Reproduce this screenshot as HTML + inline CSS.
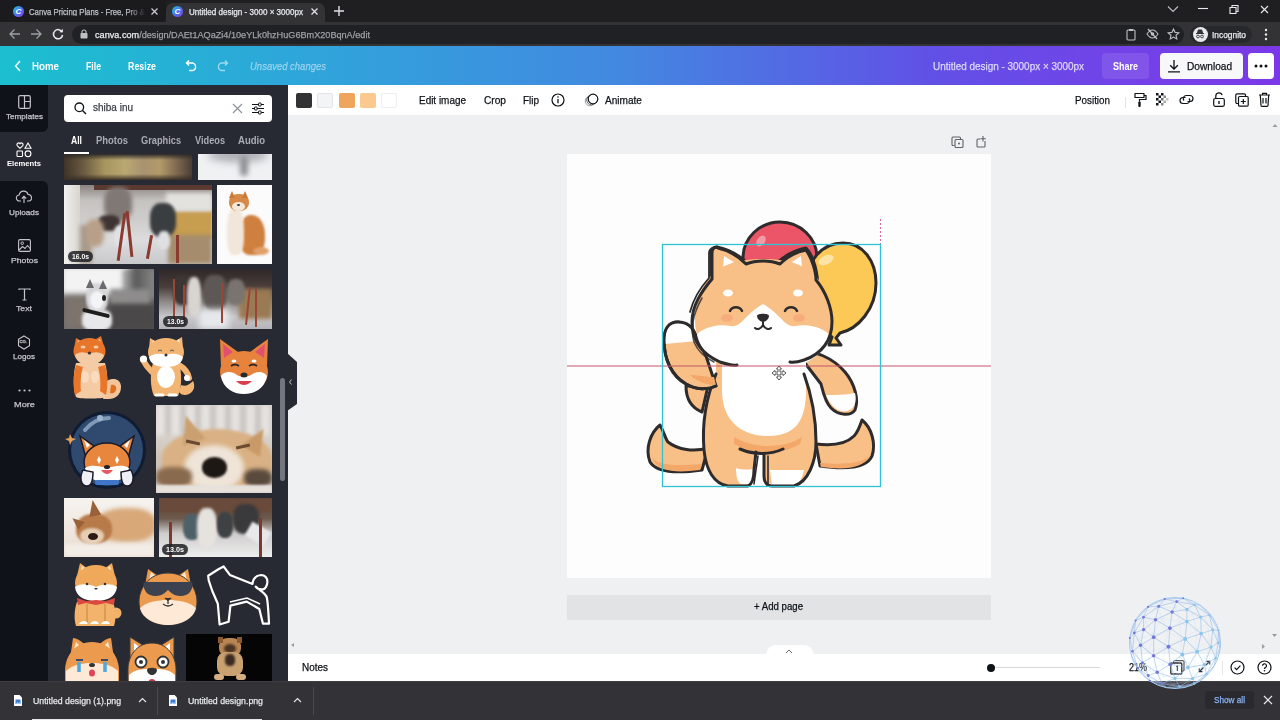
<!DOCTYPE html>
<html><head><meta charset="utf-8">
<style>
*{margin:0;padding:0;box-sizing:border-box}
html,body{width:1280px;height:720px;overflow:hidden;font-family:"Liberation Sans",sans-serif;background:#eef0f2;position:relative}
.a{position:absolute}
svg{position:absolute;overflow:visible}
.t{position:absolute;white-space:nowrap;line-height:1;transform-origin:0 50%;font-style:normal;-webkit-text-stroke:.25px currentColor}
.t.b{-webkit-text-stroke:0}
.b{font-weight:700}
#tabs{left:0;top:0;width:1280px;height:22px;background:#1f1f22}
#addr{left:0;top:22px;width:1280px;height:24px;background:#333336}
#hdr{left:0;top:46px;width:1280px;height:39px;background:linear-gradient(90deg,#1bbfcf 0%,#2ea6da 23%,#4289e0 48%,#6150e6 73%,#7342e8 88%,#7b38e8 100%)}
#nav{left:0;top:85px;width:48px;height:596px;background:#282a33}
#panel{left:48px;top:85px;width:240px;height:596px;background:#282a33;overflow:hidden}
#tool{left:288px;top:85px;width:992px;height:30px;background:#fff;box-shadow:0 1px 1px rgba(0,0,0,.06)}
#foot{left:288px;top:654px;width:992px;height:27px;background:#fff}
#dl{left:0;top:681px;width:1280px;height:39px;background:#333236;border-top:1px solid #3e3d42}
.nl{color:#c3c5ca;font-size:7.5px}
</style></head><body>
<!-- ===== browser tabs ===== -->
<div id="tabs" class="a">
  <div class="a" style="left:0;top:0;width:166px;height:22px;background:#1b1b1e;border-bottom-right-radius:6px"></div>
  <div class="a" style="left:166px;top:3px;width:159px;height:19px;background:#333336;border-radius:7px 7px 0 0"></div>
  <div class="a" style="left:13px;top:5.5px;width:11px;height:11px;border-radius:50%;background:linear-gradient(135deg,#22c6d6,#4e6ff0 55%,#8b3ce8);color:#fff;font:italic 700 8px 'Liberation Sans';text-align:center;line-height:11px">C</div>
  <i class="t" style="left: 29px; top: 7.5px; font-size: 8.5px; color: rgb(189, 193, 198); mask-image: linear-gradient(90deg, rgb(0, 0, 0) 85%, transparent); transform: scaleX(0.909);">Canva Pricing Plans - Free, Pro &amp;</i>
  <svg style="left:150px;top:7px" width="9" height="9"><path d="M1.5 1.5l6 6M7.5 1.5l-6 6" stroke="#c8cacd" stroke-width="1.3"></path></svg>
  <div class="a" style="left:172px;top:5.5px;width:11px;height:11px;border-radius:50%;background:linear-gradient(135deg,#22c6d6,#4e6ff0 55%,#8b3ce8);color:#fff;font:italic 700 8px 'Liberation Sans';text-align:center;line-height:11px">C</div>
  <i class="t" style="left: 189px; top: 7.5px; font-size: 8.5px; color: rgb(232, 234, 237); transform: scaleX(0.948);">Untitled design - 3000 × 3000px</i>
  <svg style="left:309.5px;top:7px" width="9" height="9"><path d="M1.5 1.5l6 6M7.5 1.5l-6 6" stroke="#e0e2e5" stroke-width="1.3"></path></svg>
  <svg style="left:333px;top:5px" width="12" height="12"><path d="M6 1v10M1 6h10" stroke="#e0e2e5" stroke-width="1.4"></path></svg>
  <svg style="left:1167px;top:5px" width="12" height="8"><path d="M1 1.5l5 5 5-5" stroke="#bdc1c6" stroke-width="1.1" fill="none"></path></svg>
  <svg style="left:1198px;top:7px" width="11" height="4"><path d="M0 1.5h10" stroke="#e8eaed" stroke-width="1.1"></path></svg>
  <svg style="left:1229px;top:4px" width="10" height="10"><path d="M1 3.5h6v6h-6z M3 3.5v-2h6v6h-2" stroke="#e8eaed" stroke-width="1.1" fill="none"></path></svg>
  <svg style="left:1260px;top:5px" width="9" height="9"><path d="M1 1l7 7M8 1L1 8" stroke="#e8eaed" stroke-width="1.1"></path></svg>
</div>
<!-- ===== address bar ===== -->
<div id="addr" class="a">
  <svg style="left:8px;top:6px" width="13" height="12"><path d="M12 6H2M6.5 1.5L2 6l4.5 4.5" stroke="#9aa0a6" stroke-width="1.3" fill="none"></path></svg>
  <svg style="left:30px;top:6px" width="13" height="12"><path d="M1 6h10M6.5 1.5L11 6l-4.5 4.5" stroke="#9aa0a6" stroke-width="1.3" fill="none"></path></svg>
  <svg style="left:52px;top:6px" width="12" height="12"><path d="M10.2 4.2A4.6 4.6 0 1 0 10.6 7" stroke="#e8eaed" stroke-width="1.5" fill="none"></path><path d="M7.3 4.3h3.6V0.7z" fill="#e8eaed"></path></svg>
  <div class="a" style="left:72px;top:3px;width:1112px;height:19px;border-radius:10px;background:#202124"></div>
  <svg style="left:80px;top:7px" width="8" height="10"><rect x="0.5" y="4" width="7" height="5.5" rx="0.8" fill="#bdc1c6"></rect><path d="M2 4.5V3a2 2 0 0 1 4 0v1.5" stroke="#bdc1c6" stroke-width="1.1" fill="none"></path></svg>
  <i class="t" style="left: 95px; top: 9px; font-size: 9px; color: rgb(232, 234, 237); transform: scaleX(1.014);">canva.com<span style="color:#9aa0a6">/design/DAEt1AQaZi4/10eYLk0hzHuG6BmX20BqnA/edit</span></i>
  <svg style="left:1126px;top:6px" width="10" height="13"><rect x="1" y="2" width="8" height="10" rx="1" stroke="#bdc1c6" stroke-width="1.1" fill="none"></rect><rect x="3" y="1" width="4" height="2" fill="#bdc1c6"></rect></svg>
  <svg style="left:1146px;top:6px" width="13" height="12"><path d="M1 6c2-3 4-4 5.5-4s3.5 1 5.5 4c-2 3-4 4-5.5 4S3 9 1 6z" stroke="#bdc1c6" stroke-width="1.1" fill="none"></path><circle cx="6.5" cy="6" r="1.8" fill="#bdc1c6"></circle><path d="M2 1l9 10" stroke="#bdc1c6" stroke-width="1.2"></path></svg>
  <svg style="left:1167px;top:5.5px" width="13" height="13"><path d="M6.5 1l1.6 3.4 3.7.4-2.8 2.5.8 3.7-3.3-1.9-3.3 1.9.8-3.7L1.2 4.8l3.7-.4z" stroke="#bdc1c6" stroke-width="1.1" fill="none"></path></svg>
  <div class="a" style="left:1190px;top:4px;width:62px;height:17px;border-radius:9px;background:#27282b"></div>
  <div class="a" style="left:1192.5px;top:5px;width:15px;height:15px;border-radius:50%;background:#e8eaed"></div>
  <svg style="left:1193px;top:6px" width="14" height="13"><path d="M3 5.5h8M4.5 5l1-3h3l1 3" stroke="#333" stroke-width="1.2" fill="#333"></path><circle cx="5" cy="8.5" r="1.4" stroke="#333" stroke-width="0.9" fill="none"></circle><circle cx="9" cy="8.5" r="1.4" stroke="#333" stroke-width="0.9" fill="none"></circle></svg>
  <i class="t" style="left: 1212px; top: 9px; font-size: 9px; color: rgb(232, 234, 237); transform: scaleX(0.931);">Incognito</i>
  <svg style="left:1264px;top:6px" width="4" height="13"><circle cx="2" cy="2" r="1.2" fill="#e8eaed"></circle><circle cx="2" cy="6.5" r="1.2" fill="#e8eaed"></circle><circle cx="2" cy="11" r="1.2" fill="#e8eaed"></circle></svg>
</div>
<!-- ===== canva header ===== -->
<div id="hdr" class="a">
  <svg style="left:14px;top:14px" width="8" height="12"><path d="M6 1L1.5 6 6 11" stroke="#fff" stroke-width="1.4" fill="none"></path></svg>
  <i class="t b" style="left: 32px; top: 14.5px; font-size: 10.5px; color: rgb(255, 255, 255); transform: scaleX(0.925);">Home</i>
  <i class="t b" style="left: 86px; top: 14.5px; font-size: 10.5px; color: rgb(255, 255, 255); transform: scaleX(0.829);">File</i>
  <i class="t b" style="left: 128px; top: 14.5px; font-size: 10.5px; color: rgb(255, 255, 255); transform: scaleX(0.841);">Resize</i>
  <svg style="left:185px;top:13px" width="14" height="12"><path d="M4 1.5L1.5 4 4 6.5M1.8 4H8a4 4 0 0 1 0 7.5H4" stroke="#fff" stroke-width="1.3" fill="none"></path></svg>
  <svg style="left:215px;top:12.5px" width="14" height="12"><path d="M10 1.5L12.5 4 10 6.5M12.2 4H6a4 4 0 0 0 0 7.5H10" stroke="rgba(255,255,255,.55)" stroke-width="1.3" fill="none"></path></svg>
  <i class="t" style="left: 250px; top: 14.5px; font-size: 10.5px; color: rgba(255, 255, 255, 0.42); font-style: italic; transform: scaleX(0.904);">Unsaved changes</i>
  <i class="t" style="left: 933px; top: 14.5px; font-size: 10.5px; color: rgba(255, 255, 255, 0.7); transform: scaleX(0.946);">Untitled design - 3000px × 3000px</i>
  <div class="a" style="left:1102px;top:7px;width:47px;height:26px;border-radius:4px;background:rgba(255,255,255,.1)"></div>
  <i class="t b" style="left: 1113px; top: 14.5px; font-size: 10.5px; color: rgb(255, 255, 255); transform: scaleX(0.857);">Share</i>
  <div class="a" style="left:1160px;top:7px;width:83px;height:26px;border-radius:4px;background:#f8f7fa"></div>
  <svg style="left:1167px;top:13px" width="14" height="14"><path d="M7 1v9M3.2 6.3L7 10l3.8-3.7M1 12.8h12" stroke="#0e1318" stroke-width="1.3" fill="none"></path></svg>
  <i class="t" style="left: 1187px; top: 14.5px; font-size: 10.5px; color: rgb(14, 19, 24); transform: scaleX(0.964);">Download</i>
  <div class="a" style="left:1248px;top:7px;width:26px;height:26px;border-radius:4px;background:#fff"></div>
  <svg style="left:1254px;top:18px" width="14" height="4"><circle cx="2" cy="2" r="1.5" fill="#0e1318"></circle><circle cx="7" cy="2" r="1.5" fill="#0e1318"></circle><circle cx="12" cy="2" r="1.5" fill="#0e1318"></circle></svg>
</div>
<!-- ===== left nav ===== -->
<div id="nav" class="a">
    <div class="a" style="left:0;top:0;width:48px;height:47px;background:#0f1218;border-bottom-right-radius:6px"></div>
  <div class="a" style="left:0;top:96px;width:48px;height:500px;background:#0f1218;border-top-right-radius:6px"></div>
  <svg style="left:18px;top:10px" width="13" height="14"><rect x="0.7" y="0.7" width="11.6" height="12.6" rx="1.5" stroke="#c3c5ca" stroke-width="1.2" fill="none"></rect><path d="M6.5 1v12M6.5 6.5h5.8" stroke="#c3c5ca" stroke-width="1.2"></path></svg>
  <i class="t nl" style="left: 5.5px; top: 28px; transform: scaleX(1.082);">Templates</i>
  <svg style="left:16px;top:57px" width="16" height="16"><path d="M4 6.3L1.2 3.6a1.6 1.6 0 0 1 2.8-1.8 1.6 1.6 0 0 1 2.8 1.8z" stroke="#fff" stroke-width="1.1" fill="none"></path><path d="M12 1l3 5.3H9z" stroke="#fff" stroke-width="1.1" fill="none"></path><rect x="1" y="9" width="5.5" height="5.5" rx="0.8" stroke="#fff" stroke-width="1.1" fill="none"></rect><circle cx="12" cy="11.8" r="2.9" stroke="#fff" stroke-width="1.1" fill="none"></circle></svg>
  <i class="t nl b" style="left: 7px; top: 75px; color: rgb(255, 255, 255); transform: scaleX(1.019);">Elements</i>
  <svg style="left:16px;top:105px" width="16" height="14"><path d="M5 11H3.5a3 3 0 0 1-.3-6A4.5 4.5 0 0 1 12 4.5a3 3 0 0 1 .5 6.5H11" stroke="#c3c5ca" stroke-width="1.1" fill="none"></path><path d="M8 13V6.5M5.8 8.5L8 6.3l2.2 2.2" stroke="#c3c5ca" stroke-width="1.1" fill="none"></path></svg>
  <i class="t nl" style="left: 9px; top: 124px; transform: scaleX(1.09);">Uploads</i>
  <svg style="left:18px;top:154px" width="13" height="13"><rect x="0.6" y="0.6" width="11.8" height="11.8" rx="1.3" stroke="#c3c5ca" stroke-width="1.1" fill="none"></rect><circle cx="4.2" cy="4.2" r="1.3" stroke="#c3c5ca" stroke-width="1" fill="none"></circle><path d="M1 11l3.5-3.5 2.5 2 2.5-3L12.5 10" stroke="#c3c5ca" stroke-width="1.1" fill="none"></path></svg>
  <i class="t nl" style="left: 11px; top: 172px; transform: scaleX(1.156);">Photos</i>
  <svg style="left:18px;top:203px" width="13" height="13"><path d="M1 2V1h11v1M6.5 1v11M4.5 12h4" stroke="#c3c5ca" stroke-width="1.2" fill="none"></path></svg>
  <i class="t nl" style="left: 16px; top: 220px; transform: scaleX(1.162);">Text</i>
  <svg style="left:17px;top:250px" width="14" height="15"><path d="M7 1l5.5 3.2v6.6L7 14 1.5 10.8V4.2z" stroke="#c3c5ca" stroke-width="1.1" fill="none"></path></svg>
  <i class="t" style="left:19.5px;top:255px;font-size:4px;color:#c3c5ca;font-weight:700">CO.</i>
  <i class="t nl" style="left: 13px; top: 268px; transform: scaleX(1.076);">Logos</i>
  <svg style="left:18px;top:304px" width="13" height="3"><circle cx="1.5" cy="1.5" r="1.1" fill="#c3c5ca"></circle><circle cx="6.5" cy="1.5" r="1.1" fill="#c3c5ca"></circle><circle cx="11.5" cy="1.5" r="1.1" fill="#c3c5ca"></circle></svg>
  <i class="t nl" style="left: 13.5px; top: 316px; transform: scaleX(1.229);">More</i>
</div>
<div id="panel" class="a">
  <div class="a" style="left:16px;top:10px;width:208px;height:27px;border-radius:4px;background:#fff"></div>
  <svg style="left:26px;top:17px" width="13" height="13"><circle cx="5.3" cy="5.3" r="4.3" stroke="#0e1318" stroke-width="1.3" fill="none"></circle><path d="M8.5 8.5l3.5 3.5" stroke="#0e1318" stroke-width="1.4"></path></svg>
  <i class="t" style="left: 45px; top: 18px; font-size: 10px; color: rgb(60, 63, 69); transform: scaleX(0.999);">shiba inu</i>
  <svg style="left:184px;top:18px" width="11" height="11"><path d="M1 1l9 9M10 1l-9 9" stroke="#8b8e94" stroke-width="1.1"></path></svg>
  <svg style="left:203px;top:17px" width="14" height="13"><path d="M1 2.5h12M1 6.5h12M1 10.5h12" stroke="#0e1318" stroke-width="1.1"></path><rect x="7.5" y="1" width="2.6" height="3" rx=".5" fill="#fff" stroke="#0e1318" stroke-width="1"></rect><rect x="3.5" y="5" width="2.6" height="3" rx=".5" fill="#fff" stroke="#0e1318" stroke-width="1"></rect><rect x="7.5" y="9" width="2.6" height="3" rx=".5" fill="#fff" stroke="#0e1318" stroke-width="1"></rect></svg>
  <i class="t b" style="left: 23px; top: 49.5px; font-size: 10.5px; color: rgb(255, 255, 255); transform: scaleX(0.82);">All</i>
  <i class="t b" style="left: 48px; top: 49.5px; font-size: 10.5px; color: rgb(168, 171, 178); transform: scaleX(0.899);">Photos</i>
  <i class="t b" style="left: 93px; top: 49.5px; font-size: 10.5px; color: rgb(168, 171, 178); transform: scaleX(0.879);">Graphics</i>
  <i class="t b" style="left: 147px; top: 49.5px; font-size: 10.5px; color: rgb(168, 171, 178); transform: scaleX(0.876);">Videos</i>
  <i class="t b" style="left: 190px; top: 49.5px; font-size: 10.5px; color: rgb(168, 171, 178); transform: scaleX(0.908);">Audio</i>
  <div class="a" style="left:16px;top:67px;width:25px;height:2px;background:#fff"></div>
  <!-- row0 -->
  <div class="a" style="left:16px;top:69px;width:128px;height:26px;overflow:hidden;background:linear-gradient(90deg,#3f3428 0%,#6a5a40 15%,#a89660 32%,#b9a872 48%,#a89271 62%,#b39a68 75%,#6e5b48 92%,#4a3d33 100%)"><div class="a" style="left:0;top:0;width:128px;height:6px;background:linear-gradient(#2e2a28,transparent)"></div><div class="a" style="left:0;top:20px;width:128px;height:6px;background:linear-gradient(transparent,#3a3026)"></div></div>
  <div class="a" style="left:150px;top:69px;width:74px;height:26px;overflow:hidden;background:#f0f1f3"><div class="a" style="left:10px;top:-6px;width:60px;height:14px;border-radius:50%;background:#a9abb0;filter:blur(4px)"></div><div class="a" style="left:42px;top:2px;width:8px;height:20px;border-radius:4px;background:#8e9096;filter:blur(2.5px)"></div></div>
  <!-- row1 -->
  <div class="a" style="left:16px;top:100px;width:148px;height:79px;overflow:hidden;background:linear-gradient(180deg,#8a8280 0%,#c6c3c0 20%,#cfcdcc 45%,#dcdcde 70%,#c9c9cb 100%)">
    <div class="a" style="left:30px;top:0;width:118px;height:5px;background:#5a3a30;filter:blur(.5px)"></div>
    <div class="a" style="left:0;top:0;width:16px;height:79px;background:linear-gradient(90deg,#f2f2f0,#d8d4ce)"></div>
    <div class="a" style="left:16px;top:40px;width:12px;height:39px;background:#a89a8a;filter:blur(2px)"></div>
    <div class="a" style="left:104px;top:26px;width:44px;height:28px;background:#c79d4f;filter:blur(1px)"></div>
    <div class="a" style="left:104px;top:50px;width:44px;height:29px;background:#a48c6c;filter:blur(2px)"></div>
    <div class="a" style="left:102px;top:8px;width:46px;height:18px;background:#e4e2de;filter:blur(2px)"></div>
    <div class="a" style="left:40px;top:2px;width:28px;height:34px;border-radius:40%;background:#807874;filter:blur(2px)"></div>
    <div class="a" style="left:34px;top:30px;width:22px;height:16px;border-radius:40%;background:#3e3432;filter:blur(1.5px)"></div>
    <div class="a" style="left:22px;top:34px;width:18px;height:28px;border-radius:40%;background:#b8a088;filter:blur(2px)"></div>
    <div class="a" style="left:50px;top:40px;width:12px;height:22px;border-radius:40%;background:#e2e2e4;filter:blur(1.5px)"></div>
    <div class="a" style="left:86px;top:18px;width:26px;height:34px;border-radius:40%;background:#3a3e40;filter:blur(1.5px)"></div>
    <div class="a" style="left:94px;top:46px;width:12px;height:18px;border-radius:40%;background:#e0e0e2;filter:blur(1.5px)"></div>
    <div class="a" style="left:56px;top:28px;width:2.5px;height:48px;background:#8a3a2f;transform:rotate(8deg)"></div>
    <div class="a" style="left:64px;top:26px;width:2.5px;height:46px;background:#8a3a2f;transform:rotate(-6deg)"></div>
    <div class="a" style="left:112px;top:50px;width:2.5px;height:28px;background:#8a3a2f"></div>
    <div class="a" style="left:84px;top:50px;width:2.5px;height:24px;background:#8a3a2f;transform:rotate(10deg)"></div>
    <div class="a" style="left:4px;top:66px;width:25px;height:11px;border-radius:6px;background:rgba(30,32,36,.85)"></div>
    <i class="t b" style="left: 8px; top: 67.5px; font-size: 8px; color: rgb(255, 255, 255); transform: scaleX(0.849);">16.0s</i>
  </div>
  <div class="a" style="left:169px;top:100px;width:55px;height:79px;overflow:hidden;background:#fbfbfb">
    <div class="a" style="left:22px;top:30px;width:26px;height:40px;border-radius:45% 50% 40% 40%;background:#cf7f3e;filter:blur(1.2px)"></div>
    <div class="a" style="left:10px;top:22px;width:17px;height:48px;border-radius:45% 45% 35% 35%;background:#f2e6da;filter:blur(1px)"></div>
    <div class="a" style="left:12px;top:9px;width:20px;height:17px;border-radius:45%;background:#d78a48;filter:blur(.6px)"></div>
    <div class="a" style="left:12px;top:6px;width:0;height:0;border-left:3px solid transparent;border-right:3px solid transparent;border-bottom:7px solid #c97a3a"></div>
    <div class="a" style="left:25px;top:6px;width:0;height:0;border-left:3px solid transparent;border-right:3px solid transparent;border-bottom:7px solid #c97a3a"></div>
    <div class="a" style="left:15px;top:17px;width:13px;height:9px;border-radius:50%;background:#f4e8dc;filter:blur(.6px)"></div>
    <div class="a" style="left:20px;top:19px;width:3px;height:2px;border-radius:50%;background:#333"></div>
    <div class="a" style="left:36px;top:62px;width:16px;height:8px;border-radius:50%;background:#e0a06a;filter:blur(1px)"></div>
  </div>
  <!-- row2 -->
  <div class="a" style="left:16px;top:184px;width:90px;height:60px;overflow:hidden;background:#6e6a68">
    <div class="a" style="left:-4px;top:-4px;width:70px;height:30px;background:#f3f3f3;filter:blur(3px)"></div>
    <div class="a" style="left:58px;top:0;width:34px;height:30px;background:linear-gradient(90deg,#b8b8b8,#5a5a5a 40%,#8a8a8a);filter:blur(2px)"></div>
    <div class="a" style="left:0;top:28px;width:30px;height:32px;background:#7d746e;filter:blur(3px)"></div>
    <div class="a" style="left:44px;top:34px;width:50px;height:30px;background:#4a4848;filter:blur(3px)"></div>
    <div class="a" style="left:46px;top:20px;width:40px;height:14px;background:#8e8c8c;filter:blur(2px)"></div>
    <div class="a" style="left:18px;top:40px;width:30px;height:22px;border-radius:40%;background:#e8e8ea;filter:blur(1.5px)"></div>
    <div class="a" style="left:22px;top:14px;width:22px;height:30px;border-radius:40% 40% 45% 45%;background:#d6d6da;filter:blur(1px)"></div>
    <div class="a" style="left:26px;top:22px;width:14px;height:18px;border-radius:50%;background:#f4f4f6;filter:blur(1px)"></div>
    <div class="a" style="left:22px;top:10px;width:0;height:0;border-left:4px solid transparent;border-right:4px solid transparent;border-bottom:9px solid #6a6a6e"></div>
    <div class="a" style="left:35px;top:11px;width:0;height:0;border-left:4px solid transparent;border-right:4px solid transparent;border-bottom:9px solid #6a6a6e"></div>
    <div class="a" style="left:38px;top:26px;width:4px;height:6px;border-radius:50%;background:#222"></div>
    <div class="a" style="left:18px;top:42px;width:28px;height:4px;border-radius:2px;background:#1e1e1e;transform:rotate(14deg)"></div>
  </div>
  <div class="a" style="left:111px;top:184px;width:113px;height:60px;overflow:hidden;background:linear-gradient(180deg,#2e2828 0%,#4a3e3a 30%,#8f8a88 55%,#c9c9cc 80%,#b4b4b8 100%)">
    <div class="a" style="left:80px;top:20px;width:33px;height:30px;background:#9a7a52;filter:blur(2px)"></div>
    <div class="a" style="left:14px;top:6px;width:20px;height:30px;border-radius:40%;background:#3c3634;filter:blur(1.5px)"></div>
    <div class="a" style="left:28px;top:8px;width:14px;height:40px;border-radius:40%;background:#d8d4d0;filter:blur(1.5px)"></div>
    <div class="a" style="left:44px;top:6px;width:24px;height:36px;border-radius:40%;background:#5d5855;filter:blur(1.5px)"></div>
    <div class="a" style="left:68px;top:10px;width:18px;height:26px;border-radius:40%;background:#7a7470;filter:blur(1.5px)"></div>
    <div class="a" style="left:40px;top:40px;width:30px;height:20px;background:#e6e8ec;filter:blur(3px)"></div>
    <div class="a" style="left:14px;top:10px;width:2px;height:46px;background:#9a4636"></div>
    <div class="a" style="left:24px;top:16px;width:2px;height:40px;background:#9a4636"></div>
    <div class="a" style="left:62px;top:14px;width:2px;height:40px;background:#9a4636"></div>
    <div class="a" style="left:88px;top:18px;width:2px;height:38px;background:#9a4636;transform:rotate(6deg)"></div>
    <div class="a" style="left:96px;top:20px;width:2px;height:38px;background:#9a4636"></div>
    <div class="a" style="left:4px;top:47px;width:25px;height:11px;border-radius:6px;background:rgba(30,32,36,.85)"></div>
    <i class="t b" style="left: 8px; top: 48.5px; font-size: 8px; color: rgb(255, 255, 255); transform: scaleX(0.849);">13.0s</i>
  </div>
  <!-- row3 stickers -->
  <svg style="left:25px;top:250px" width="48" height="64" viewBox="0 0 48 64">
    <path d="M34 46c6-4 14-2 14 6 0 8-6 12-12 12h-6z" fill="#f3c39a"></path>
    <path d="M38 50c4-1 6 2 5 5-1 3-4 4-6 3" fill="#e0701f"></path>
    <path d="M3 28c-3 10-3 26 0 34 2 2 26 2 30 0 2-8 2-24-1-34z" fill="#f5cba6"></path>
    <path d="M3 30c-3 10-3 22-1 30l6-4c-1-8 0-18 2-24zM32 30c3 10 3 22 1 30l-6-4c1-8 0-18-2-24z" fill="#e8762a"></path>
    <ellipse cx="12" cy="42" rx="4" ry="6" fill="#f9dcc0"></ellipse><ellipse cx="22" cy="42" rx="4" ry="6" fill="#f9dcc0"></ellipse>
    <path d="M1 14L3 3l9 5zM31 12L28 1l-8 5z" fill="#e8762a"></path>
    <path d="M4 9l1-4 4 2zM28 8l-1-4-4 2z" fill="#f5cba6"></path>
    <ellipse cx="16.5" cy="16" rx="16" ry="13" fill="#e8762a"></ellipse>
    <path d="M2 20c4-4 10-3 14-1 4-2 10-3 15 1-1 6-7 10-15 10S3 26 2 20z" fill="#f5cba6"></path>
    <ellipse cx="10" cy="12" rx="2.5" ry="1.5" fill="#f5cba6"></ellipse><ellipse cx="23" cy="12" rx="2.5" ry="1.5" fill="#f5cba6"></ellipse>
    <circle cx="16.5" cy="18" r="1.6" fill="#333"></circle>
  </svg>
  <svg style="left:91px;top:250px" width="56" height="64" viewBox="0 0 56 64">
    <path d="M42 50c4 2 8 0 12-4 2 4 2 10-4 13-4 2-8 1-10-2z" fill="#f3b573"></path>
    <path d="M40 30c5 3 9 7 10 13" stroke="#f3b573" stroke-width="6" fill="none" stroke-linecap="round"></path>
    <circle cx="48" cy="43" r="3" fill="#fff"></circle>
    <path d="M4 25c2 4 5 8 9 12" stroke="#f3b573" stroke-width="6" fill="none" stroke-linecap="round"></path>
    <circle cx="4.5" cy="24" r="3.6" fill="#fff"></circle>
    <path d="M14 28c-3 10-3 24 1 33h24c4-9 4-23 1-33z" fill="#f3b573"></path>
    <ellipse cx="27" cy="42" rx="9" ry="11" fill="#fff"></ellipse>
    <path d="M17 60h7M30 60h7" stroke="#fff" stroke-width="3" stroke-linecap="round"></path>
    <path d="M10 14L11 3l10 6zM44 13L43 2l-10 6z" fill="#f3b573"></path>
    <path d="M13 9l1-4 4 3zM41 8l-1-4-4 3z" fill="#fde6c9"></path>
    <ellipse cx="27" cy="17" rx="18" ry="14" fill="#f3b573"></ellipse>
    <path d="M10 22c5-4 11-4 17-2 6-2 12-2 17 2-1 7-8 10-17 10S11 29 10 22z" fill="#fff"></path>
    <path d="M19 16q2-2 4 0M31 16q2-2 4 0" stroke="#555" stroke-width="1" fill="none"></path>
    <circle cx="27" cy="20" r="1.5" fill="#333"></circle>
  </svg>
  <svg style="left:169px;top:251px" width="54" height="60" viewBox="0 0 54 60">
    <path d="M4 30L3 3l18 13zM50 30L51 3 33 16z" fill="#e8833d"></path>
    <path d="M7 22L6 8l10 8zM47 22L48 8l-10 8z" fill="#e1516f"></path>
    <ellipse cx="27" cy="36" rx="24" ry="21" fill="#e8833d"></ellipse>
    <path d="M4 40c4-6 12-4 16-1 3 2 11 2 14 0 4-3 12-5 16 1-2 12-12 18-23 18S6 52 4 40z" fill="#fff"></path>
    <path d="M14 30q4-3 8 0M32 30q4-3 8 0" stroke="#2b2b2b" stroke-width="1.8" fill="none"></path>
    <ellipse cx="27" cy="39" rx="3.5" ry="2.5" fill="#2b2b2b"></ellipse>
    <path d="M19 45q8 8 16 0z" fill="#d9404f"></path>
    <ellipse cx="17" cy="25" rx="2.5" ry="1.5" fill="#fff"></ellipse>
    <ellipse cx="37" cy="25" rx="2.5" ry="1.5" fill="#fff"></ellipse>
  </svg>
  <!-- row4 -->
  <svg style="left:17px;top:325px" width="85" height="80" viewBox="0 0 85 80">
    <circle cx="42" cy="40" r="39" fill="#0f1c33"></circle>
    <circle cx="42" cy="40" r="36" fill="#2f4a6e"></circle>
    <path d="M20 20q10-12 24-12" stroke="#7e9ab8" stroke-width="4" fill="none" stroke-linecap="round"></path>
    <circle cx="35" cy="8" r="3" fill="#9fb5cc"></circle>
    <path d="M5 24l2 4 4 1-4 2-2 4-1-4-4-2 4-1z" fill="#e8a35a"></path>
    <path d="M21 48l-6-22 14 10zM63 48l6-22-14 10z" fill="#e8863e" stroke="#1a1a2a" stroke-width="1.5"></path>
    <path d="M22 38l-3-8 6 5zM62 38l3-8-6 5z" fill="#fff"></path>
    <ellipse cx="42" cy="52" rx="23" ry="19" fill="#e8863e" stroke="#1a1a2a" stroke-width="1.5"></ellipse>
    <path d="M20 58c6-4 14-2 22 0 8-2 16-4 22 0-2 10-10 14-22 14S22 68 20 58z" fill="#fff"></path>
    <path d="M32 50l2-4 2 4-2 4zM50 50l2-4 2 4-2 4z" fill="#fff"></path>
    <path d="M36 60q6 8 12 0z" fill="#e35a62"></path>
    <ellipse cx="42" cy="57" rx="3" ry="2" fill="#222"></ellipse>
    <path d="M18 60c-4 8-2 16 4 16s6-10 6-14zM66 60c4 8 2 16-4 16s-6-10-6-14z" fill="#eef0f6" stroke="#1a1a2a" stroke-width="1.5"></path>
    <rect x="30" y="70" width="24" height="5" rx="2" fill="#3f76c8"></rect>
  </svg>
  <div class="a" style="left:108px;top:320px;width:116px;height:88px;overflow:hidden;background:linear-gradient(180deg,#d2cdc8 0%,#dcd8d4 25%,#cfc3b6 60%,#c9bfb5 100%)">
    <div class="a" style="left:0;top:0;width:116px;height:30px;background:repeating-linear-gradient(90deg,#e6e3e0 0 9px,#c8c4c0 9px 15px);filter:blur(2px)"></div>
    <div class="a" style="left:6px;top:24px;width:110px;height:58px;border-radius:50% 50% 35% 35%;background:#d9b184;filter:blur(1.5px)"></div>
    <div class="a" style="left:22px;top:10px;width:0;height:0;border-left:12px solid transparent;border-right:12px solid transparent;border-bottom:28px solid #caa070;transform:rotate(-18deg);filter:blur(.8px)"></div>
    <div class="a" style="left:90px;top:22px;width:0;height:0;border-left:11px solid transparent;border-right:11px solid transparent;border-bottom:26px solid #c99a68;transform:rotate(30deg);filter:blur(.8px)"></div>
    <div class="a" style="left:28px;top:40px;width:60px;height:46px;border-radius:50%;background:#efe4d8;filter:blur(2.5px)"></div>
    <div class="a" style="left:46px;top:52px;width:25px;height:21px;border-radius:48%;background:#1e1814;filter:blur(1px)"></div>
    <div class="a" style="left:30px;top:36px;width:14px;height:3px;background:#6a4a30;transform:rotate(12deg)"></div>
    <div class="a" style="left:80px;top:40px;width:14px;height:3px;background:#6a4a30;transform:rotate(-12deg)"></div>
    <div class="a" style="left:0;top:62px;width:36px;height:20px;border-radius:40%;background:#8a6a4e;filter:blur(2px)"></div>
    <div class="a" style="left:88px;top:64px;width:28px;height:18px;border-radius:40%;background:#5a4a3e;filter:blur(2px)"></div>
    <div class="a" style="left:0;top:80px;width:116px;height:8px;background:#e6e1db;filter:blur(1px)"></div>
  </div>
  <!-- row5 -->
  <div class="a" style="left:16px;top:413px;width:90px;height:59px;overflow:hidden;background:linear-gradient(180deg,#f6f3f0 0%,#f0e8e0 50%,#e8dacd 100%)">
    <div class="a" style="left:30px;top:10px;width:62px;height:34px;border-radius:50% 40% 40% 50%;background:#d8a878;filter:blur(2px)"></div>
    <div class="a" style="left:12px;top:16px;width:36px;height:30px;border-radius:45%;background:#b87a48;filter:blur(1px)"></div>
    <div class="a" style="left:24px;top:2px;width:0;height:0;border-left:6px solid transparent;border-right:6px solid transparent;border-bottom:16px solid #9a6038;transform:rotate(-10deg)"></div>
    <div class="a" style="left:8px;top:18px;width:0;height:0;border-left:5px solid transparent;border-right:5px solid transparent;border-bottom:12px solid #9a6038;transform:rotate(-50deg)"></div>
    <div class="a" style="left:16px;top:30px;width:24px;height:16px;border-radius:50%;background:#e6cdb4;filter:blur(1px)"></div>
    <div class="a" style="left:24px;top:35px;width:10px;height:7px;border-radius:50%;background:#2a1c14"></div>
    <div class="a" style="left:0;top:46px;width:90px;height:13px;background:#f3ede7;filter:blur(2px)"></div>
  </div>
  <div class="a" style="left:111px;top:413px;width:113px;height:59px;overflow:hidden;background:linear-gradient(180deg,#5a4236 0%,#6e5a4c 35%,#cfcdcc 60%,#eeeeee 100%)">
    <div class="a" style="left:0;top:0;width:113px;height:14px;background:#6a4a3a;filter:blur(1px)"></div>
    <div class="a" style="left:24px;top:16px;width:18px;height:26px;border-radius:40%;background:#4e6068;filter:blur(1px)"></div>
    <div class="a" style="left:38px;top:10px;width:20px;height:40px;border-radius:40%;background:#e6e2de;filter:blur(1.5px)"></div>
    <div class="a" style="left:58px;top:14px;width:16px;height:26px;border-radius:40%;background:#3e4244;filter:blur(1px)"></div>
    <div class="a" style="left:74px;top:6px;width:26px;height:30px;border-radius:40%;background:#3a3a3c;filter:blur(1.5px)"></div>
    <div class="a" style="left:88px;top:28px;width:22px;height:16px;background:#e8e8ea;transform:rotate(30deg);filter:blur(1px)"></div>
    <div class="a" style="left:10px;top:24px;width:3px;height:35px;background:#7b3a2e"></div>
    <div class="a" style="left:100px;top:20px;width:3px;height:39px;background:#7b3a2e"></div>
    <div class="a" style="left:3px;top:46px;width:26px;height:11px;border-radius:6px;background:rgba(30,32,36,.85)"></div>
    <i class="t b" style="left: 7px; top: 47.5px; font-size: 8px; color: rgb(255, 255, 255); transform: scaleX(0.899);">13.0s</i>
  </div>
  <!-- row6 stickers -->
  <svg style="left:25px;top:477px" width="48" height="66" viewBox="0 0 48 66">
    <circle cx="43" cy="51" r="5.5" fill="#f0b26a"></circle>
    <path d="M4 40c-3 8-3 18-1 24h38c2-6 2-16-1-24z" fill="#f4b36b"></path>
    <path d="M14 42v20M32 42v20" stroke="#b7773a" stroke-width=".8"></path>
    <path d="M6 62c2-4 8-4 9 0zM17 62c2-4 8-4 9 0zM28 62c2-4 8-4 9 0z" fill="#fff"></path>
    <path d="M4 14L7 1l11 8zM42 14L39 1 28 9z" fill="#f0a85a"></path>
    <path d="M7 12L9 4l5 4zM39 12l-2-8-5 4z" fill="#fde6c9"></path>
    <ellipse cx="23" cy="21" rx="21" ry="18" fill="#f0a85a"></ellipse>
    <path d="M2 25c6-4 14-3 21 0 7-3 15-4 21 0-1 9-9 14-21 14S3 34 2 25z" fill="#fff"></path>
    <circle cx="14" cy="22" r="1.3" fill="#333"></circle><circle cx="32" cy="22" r="1.3" fill="#333"></circle>
    <path d="M21 26h4l-2 2z" fill="#333"></path>
    <path d="M4 36l9 3 10-1 10 1 9-3-1 7-8-2-10 2-10-2-8 2z" fill="#d9493f"></path>
  </svg>
  <svg style="left:89px;top:481px" width="62" height="60" viewBox="0 0 62 60">
    <path d="M8 20L11 3l13 9zM54 20L51 3 38 12z" fill="#eb9a4e"></path>
    <path d="M12 14l2-8 6 5zM50 14l-2-8-6 5z" fill="#fde6c9"></path>
    <path d="M31 7C12 7 2 22 2 36c0 15 14 23 29 23s29-8 29-23C60 22 50 7 31 7z" fill="#eb9a4e" stroke="#3a3a3a" stroke-width="1"></path>
    <path d="M3 42c6-6 18-8 28-8s22 2 28 8c-2 10-14 17-28 17S5 52 3 42z" fill="#fde9d6"></path>
    <path d="M8 16h46c2 0 2 3 1 6-2 6-6 8-12 8-5 0-9-3-12-6-3 3-7 6-12 6-6 0-10-2-12-8-1-3-1-6 1-6z" fill="#3d4250"></path>
    <path d="M28 32l3 2 3-2" stroke="#333" stroke-width="1.5" fill="#333"></path>
    <path d="M31 34v4M26 38q5 4 10 0" stroke="#333" stroke-width="1.3" fill="none"></path>
  </svg>
  <svg style="left:158.5px;top:481px" width="67" height="60" viewBox="0 0 67 60">
    <path d="M1.2 9.8L11 3.5 16.6 0.5 22.9 8.9 45.5 17.9C46 13 49 9.5 54 9c4 0 6.5 3 6.4 7-.1 4-2.5 7-4.5 7.3-3 .3-6-1-7.2-2.7 3 3 8 5 10.8 9.9 1.5 4 2 18 2.5 27.1H55.9L52.3 43 39.7 35.6 23.4 39.6 21.6 55.8 12.6 58.5 10.8 37.8 5.3 25 1.7 14.3z" fill="none" stroke="#fff" stroke-width="2.2" stroke-linejoin="round"></path>
    <path d="M23 36l17-4 13 6" stroke="#fff" stroke-width="1.6" fill="none"></path>
  </svg>
  <!-- row7 -->
  <svg style="left:16px;top:550px" width="56" height="50" viewBox="0 0 56 50">
    <path d="M6 24L9 3c4 0 10 4 14 9zM50 24L47 3c-4 0-10 4-14 9z" fill="#eb9a4e"></path>
    <path d="M10 14l2-7 5 5zM46 14l-2-7-5 5z" fill="#fde6c9"></path>
    <path d="M28 7C10 7 1 22 1 36v14h54V36C55 22 46 7 28 7z" fill="#eb9a4e"></path>
    <path d="M2 36c6-6 16-8 26-8s20 2 26 8v14H2z" fill="#fde9d6"></path>
    <path d="M12 25h7M37 25h7" stroke="#3b4a6b" stroke-width="2"></path>
    <path d="M15 27v10M41 27v10" stroke="#4aa8e0" stroke-width="3.5"></path>
    <ellipse cx="28" cy="30" rx="3" ry="2" fill="#333"></ellipse>
    <ellipse cx="28" cy="38" rx="3" ry="3.5" fill="#e0455a"></ellipse>
  </svg>
  <svg style="left:78px;top:550px" width="52" height="50" viewBox="0 0 52 50">
    <path d="M4 24L4 2l16 10zM48 24V2L32 12z" fill="#eb9a4e" stroke="#3a3a3a" stroke-width="1"></path>
    <path d="M8 18V8l8 6zM44 18V8l-8 6z" fill="#fff"></path>
    <path d="M26 8C10 8 2 22 2 34v16h48V34C50 22 42 8 26 8z" fill="#eb9a4e" stroke="#3a3a3a" stroke-width="1"></path>
    <path d="M3 40c6-6 14-6 23-6s17 0 23 6v10H3z" fill="#fff"></path>
    <circle cx="15" cy="27" r="5.5" fill="#fff" stroke="#333" stroke-width="1.8"></circle><circle cx="15" cy="27" r="2" fill="#333"></circle>
    <circle cx="37" cy="27" r="5.5" fill="#fff" stroke="#333" stroke-width="1.8"></circle><circle cx="37" cy="27" r="2" fill="#333"></circle>
    <path d="M21 35c0-3 10-3 10 0 0 3-3 5-5 5s-5-2-5-5z" fill="#333"></path>
    <ellipse cx="26" cy="47" rx="3.5" ry="3" fill="#c83e4a"></ellipse>
  </svg>
  <div class="a" style="left:138px;top:549px;width:86px;height:47px;overflow:hidden;background:#050505">
    <div class="a" style="left:33px;top:4px;width:22px;height:18px;border-radius:40%;background:#b98552;filter:blur(.6px)"></div>
    <div class="a" style="left:32px;top:3px;width:5px;height:6px;background:#8a5a30"></div>
    <div class="a" style="left:51px;top:3px;width:5px;height:6px;background:#8a5a30"></div>
    <div class="a" style="left:38px;top:10px;width:12px;height:9px;border-radius:50%;background:#4a3424;filter:blur(.8px)"></div>
    <div class="a" style="left:31px;top:18px;width:26px;height:24px;border-radius:35%;background:#c9a070;filter:blur(.6px)"></div>
    <div class="a" style="left:39px;top:20px;width:10px;height:12px;border-radius:40%;background:#3a2a20;filter:blur(1px)"></div>
    <div class="a" style="left:28px;top:40px;width:10px;height:6px;border-radius:3px;background:#d4ae82"></div>
    <div class="a" style="left:50px;top:40px;width:10px;height:6px;border-radius:3px;background:#d4ae82"></div>
  </div>
  <!-- scrollbar -->
  <div class="a" style="left:232px;top:293px;width:5px;height:103px;border-radius:3px;background:#73767d"></div>
</div>
<div id="tool" class="a">
  <div class="a" style="left:8px;top:8px;width:16px;height:15px;border-radius:2px;background:#333335"></div>
  <div class="a" style="left:29px;top:8px;width:16px;height:15px;border-radius:2px;background:#f3f4f6;border:1px solid #e3e4e8"></div>
  <div class="a" style="left:51px;top:8px;width:16px;height:15px;border-radius:2px;background:#f0a55e"></div>
  <div class="a" style="left:72px;top:8px;width:16px;height:15px;border-radius:2px;background:#fbc88d"></div>
  <div class="a" style="left:93px;top:8px;width:16px;height:15px;border-radius:2px;background:#fff;border:1px solid #eceef0"></div>
  <i class="t" style="left: 131px; top: 9.5px; font-size: 10.5px; color: rgb(14, 19, 24); transform: scaleX(0.947);">Edit image</i>
  <i class="t" style="left: 196px; top: 9.5px; font-size: 10.5px; color: rgb(14, 19, 24); transform: scaleX(0.966);">Crop</i>
  <i class="t" style="left: 235px; top: 9.5px; font-size: 10.5px; color: rgb(14, 19, 24); transform: scaleX(0.946);">Flip</i>
  <svg style="left:263px;top:8px" width="14" height="14"><circle cx="7" cy="7" r="6" stroke="#0e1318" stroke-width="1.2" fill="none"></circle><path d="M7 6v4.2" stroke="#0e1318" stroke-width="1.3"></path><circle cx="7" cy="4" r=".8" fill="#0e1318"></circle></svg>
  <svg style="left:296px;top:8px" width="15" height="14"><circle cx="6" cy="8" r="4.8" stroke="#9a9ca0" stroke-width="1" fill="none"></circle><circle cx="7.5" cy="7" r="4.8" stroke="#6a6c70" stroke-width="1" fill="#fff"></circle><circle cx="9" cy="6" r="4.8" stroke="#0e1318" stroke-width="1.2" fill="#fff"></circle></svg>
  <i class="t" style="left: 317px; top: 9.5px; font-size: 10.5px; color: rgb(14, 19, 24); transform: scaleX(0.96);">Animate</i>
  <i class="t" style="left: 787px; top: 9.5px; font-size: 10.5px; color: rgb(14, 19, 24); transform: scaleX(0.937);">Position</i>
  <div class="a" style="left:837px;top:12px;width:1px;height:11px;background:#e3e4e8"></div>
  <svg style="left:845px;top:7px" width="15" height="16"><path d="M2 1.5h9v4H2z" stroke="#0e1318" stroke-width="1.2" fill="none" stroke-linejoin="round"></path><path d="M11 3.5h2v4H6.5v2" stroke="#0e1318" stroke-width="1.2" fill="none"></path><rect x="5.3" y="9.5" width="2.4" height="5.5" rx="1" fill="#0e1318"></rect></svg>
  <svg style="left:868px;top:8px" width="13" height="14"><g fill="#0e1318"><rect x="0" y="0" width="2.5" height="2.5"></rect><rect x="5" y="0" width="2.5" height="2.5"></rect><rect x="2.5" y="2.5" width="2.5" height="2.5"></rect><rect x="0" y="5" width="2.5" height="2.5"></rect><rect x="5" y="5" width="2.5" height="2.5" opacity=".6"></rect><rect x="2.5" y="7.5" width="2.5" height="2.5"></rect><rect x="0" y="10" width="2.5" height="2.5"></rect><rect x="5" y="10" width="2.5" height="2.5" opacity=".5"></rect><rect x="7.5" y="2.5" width="2.5" height="2.5" opacity=".5"></rect><rect x="7.5" y="7.5" width="2.5" height="2.5" opacity=".35"></rect><rect x="10" y="5" width="2.5" height="2.5" opacity=".25"></rect></g></svg>
  <svg style="left:891px;top:9px" width="15" height="11"><path d="M6.5 3.5H4a3 3 0 0 0 0 6h4a3 3 0 0 0 2-5" stroke="#0e1318" stroke-width="1.2" fill="none"></path><path d="M8.5 7.5H11a3 3 0 0 0 0-6H7a3 3 0 0 0-2 5" stroke="#0e1318" stroke-width="1.2" fill="none"></path></svg>
  <svg style="left:925px;top:7px" width="12" height="15"><rect x="0.7" y="6.5" width="10.6" height="7.8" rx="1.5" stroke="#0e1318" stroke-width="1.2" fill="none"></rect><path d="M2.8 6.5V4a3.2 3.2 0 0 1 6.3-.8" stroke="#0e1318" stroke-width="1.2" fill="none"></path><path d="M6 9v3" stroke="#0e1318" stroke-width="1.4"></path></svg>
  <svg style="left:947px;top:8px" width="14" height="14"><path d="M3 10.5H2a1.2 1.2 0 0 1-1.2-1.2V2A1.2 1.2 0 0 1 2 .8h7.3A1.2 1.2 0 0 1 10.5 2v1" stroke="#0e1318" stroke-width="1.2" fill="none"></path><rect x="3.5" y="3.5" width="9.7" height="9.7" rx="1.2" stroke="#0e1318" stroke-width="1.2" fill="none"></rect><path d="M8.3 6v5M5.8 8.5h5" stroke="#0e1318" stroke-width="1.2"></path></svg>
  <svg style="left:970px;top:7px" width="13" height="15"><path d="M1 3h11M4.5 3V1.3h4V3M2.3 3l.7 10.5a1 1 0 0 0 1 .9h5a1 1 0 0 0 1-.9L10.7 3" stroke="#0e1318" stroke-width="1.2" fill="none"></path><path d="M5 6v5.5M8 6v5.5" stroke="#0e1318" stroke-width="1.2"></path></svg>
</div>

<div id="canvas" class="a" style="left:288px;top:115px;width:992px;height:539px;background:#eef0f2">
  <div class="a" style="left:279px;top:39px;width:424px;height:424px;background:#fdfdfd"></div>
  <div class="a" style="left:279px;top:480px;width:424px;height:25px;background:#e1e3e5"></div>
</div>
<svg style="left:0;top:0" width="1280" height="720" viewBox="0 0 1280 720">
  <g stroke="#2d2b2c" stroke-width="3" stroke-linecap="round" stroke-linejoin="round">
    <!-- red balloon -->
    <ellipse cx="780" cy="258" rx="37" ry="36" fill="#ec5468"></ellipse>
    <ellipse cx="761" cy="241" rx="4" ry="6" fill="#f49aa6" stroke="none" transform="rotate(35 761 241)"></ellipse>
    <!-- yellow balloon -->
    <path d="M843 243c20 0 33 18 33 40 0 26-18 46-36 50l-4 5 5 7h-12l3-8c-16-6-26-26-26-52 0-24 16-42 37-42z" fill="#fcc956"></path>
    <ellipse cx="826" cy="260" rx="8" ry="4.5" fill="#fde3a6" stroke="none" transform="rotate(-25 826 260)"></ellipse>
    <!-- left tail -->
    <path d="M660 425c-10 8-15 24-10 37 6 10 24 12 52 8l6-22c-14 4-30 2-40-6-3-4-4-10-8-17z" fill="#f8bf87"></path>
    <path d="M652 458c8 8 26 8 50 6l-2 6c-24 3-42 2-48-12z" fill="#f3a86a" stroke="none"></path>
    <!-- right tail -->
    <path d="M862 420c10 8 14 24 10 36-5 12-24 14-52 10l-4-22c16 2 30 0 38-8 4-4 6-10 8-16z" fill="#f8bf87"></path>
    <path d="M870 455c-6 8-24 10-50 8l1 4c24 3 42 2 49-12z" fill="#f3a86a" stroke="none"></path>
    <!-- right arm -->
    <path d="M795 350c20 0 38 8 50 22 10 12 14 28 10 38-4 6-16 6-24-2-6-6-8-16-10-24z" fill="#f8bf87"></path>
    <path d="M826 395c8 0 20 0 29-2 2 8 0 16-8 18-8 2-16-4-21-16z" fill="#fff" stroke="none"></path>
    <!-- body -->
    <path d="M716 360v14c-10 24-14 52-12 76 2 20 10 34 24 36h20c4-2 6-8 6-16l2-18h8v22c0 6 3 10 8 10h22c14-4 22-24 22-44 0-24-4-46-12-68v-12z" fill="#f8bf87" stroke="none"></path>
    <path d="M722 352v38c0 30 18 46 46 46s38-16 38-46v-38z" fill="#fff" stroke="none"></path>
    <path d="M734 437c10 6 22 9 34 9s26-3 34-9l-2 7c-10 6-20 8-32 8s-24-2-34-8z" fill="#f3a86a" stroke="none"></path>
    <path d="M740 449c14 6 30 6 43 0" fill="none"></path>
    <path d="M736 468c6 2 14 2 20 0l-2 16h-12c-4 0-6-6-6-16z" fill="#fff" stroke="none"></path>
    <path d="M770 470h34c-2 8-4 12-8 15h-24z" fill="#fff" stroke="none"></path>
    <path d="M716 374c-10 24-14 52-12 76 2 20 10 34 24 36h20c4-2 6-8 6-16l2-18" fill="none"></path>
    <path d="M764 454v22c0 6 3 10 8 10h22c14-4 22-24 22-44 0-24-4-46-12-68" fill="none"></path>
    <path d="M758 456l-4 28M768 456v28" fill="none" stroke-width="1.6"></path>
    <!-- ghost arm blob -->
    <path d="M686 386c0 14 6 22 16 26l6-26z" fill="#f8bf87"></path>
    <!-- left waving arm -->
    <path d="M678 322c-10 0-14 8-14 18 0 20 8 36 22 44 10 6 22 6 30 2l-10-30c-6-10-10-32-28-34z" fill="#f8bf87"></path>
    <path d="M665 344c10-1 22-2 32-3l-4-10c-4-6-9-9-15-9-10 0-13 10-13 22z" fill="#fff" stroke="none"></path>
    <path d="M690 375c6 6 16 10 26 10l-2-8c-8 0-16-2-24-2z" fill="#f3a86a" stroke="none"></path>
    <path d="M716 386c-8 4-20 4-30-2-14-8-22-24-22-44 0-10 4-18 14-18 12 0 16 8 18 14" fill="none"></path>
<!-- ears -->
    <path d="M711 290v-38c0-3 3-5 6-5 10 2 22 8 30 16z" fill="#f8bf87"></path>
    <path d="M818 290c0-16-4-34-12-42-10 2-22 8-30 16z" fill="#f8bf87"></path>
    <path d="M723 269l1-13 13 8zM802 268l-1-12-12 8z" fill="#fff" stroke="none"></path>
    <!-- head -->
    <path d="M763 259c-34 0-58 10-66 44-6 26 2 46 18 56 14 8 30 8 48 8s34 0 48-8c16-10 24-30 18-56-8-34-32-44-66-44z" fill="#f8bf87" stroke="none"></path>
    <path d="M697 334c10-8 22-10 34-8 10 2 14-12 32-22 18 10 22 24 32 22 12-2 24 0 34 8-2 12-10 22-22 28-14 8-30 8-44 8s-30 0-44-8c-12-6-20-16-22-28z" fill="#fff" stroke="none"></path>
    <path d="M717 247c-4 0-5 3-5 6v26c-10 12-20 26-20 43 0 18 10 32 28 40 6 2 12 4 17 3" fill="none"></path><path d="M714 247c-3 1-5 3-5 6v25c-9 10-16 22-19 34" fill="none" stroke-width="1.8"></path>
    <path d="M806 250c6 8 10 22 10 30 10 12 16 28 16 42 0 18-10 32-28 38-6 2-10 3-14 2" fill="none"></path>
    <path d="M718 248c10 2 20 8 28 16 10-4 24-4 34 0 8-8 16-12 26-14" fill="none"></path>
    <path d="M702 298c-8 14-12 30-8 44 4 10 12 16 20 20" fill="none" stroke-width="1.6" opacity=".8"></path>
    <!-- face -->
    <ellipse cx="728" cy="293" rx="5" ry="3.5" fill="#fff" stroke="none"></ellipse>
    <ellipse cx="798" cy="293" rx="5" ry="3.5" fill="#fff" stroke="none"></ellipse>
    <ellipse cx="727" cy="318" rx="6" ry="4" fill="#f6a77a" stroke="none" opacity=".8"></ellipse>
    <ellipse cx="799" cy="318" rx="6" ry="4" fill="#f6a77a" stroke="none" opacity=".8"></ellipse>
    <path d="M730 311c2-5 10-5 12 0M785 311c2-5 10-5 12 0" fill="none" stroke-width="2.4"></path>
    <path d="M757 316c0-3 12-3 12 0 0 3-4 6-6 6s-6-3-6-6z" fill="#2d2b2c" stroke="none"></path>
    <path d="M763 322v3c-2 4-6 5-8 3M763 325c2 4 6 5 8 3" fill="none" stroke-width="2"></path>
  </g>
</svg>
<svg style="left:0;top:0" width="1280" height="720" viewBox="0 0 1280 720">
  <!-- page icons -->
  <g stroke="#5f6368" stroke-width="1.1" fill="none">
    <path d="M954.5 145.5h-1.5a1 1 0 0 1-1-1v-6.5a1 1 0 0 1 1-1h6.5a1 1 0 0 1 1 1v1"></path>
    <rect x="955" y="139.5" width="8" height="8" rx="1"></rect>
    <path d="M985 141v5a1 1 0 0 1-1 1h-6a1 1 0 0 1-1-1v-6a1 1 0 0 1 1-1h2M983 136v5.5M980.3 138.7h5.5"></path>
  </g>
  <circle cx="959" cy="143.5" r="1" fill="#5f6368"></circle>
  <!-- guide lines -->
  <line x1="567" y1="366" x2="991" y2="366" stroke="#c2556a" stroke-width="1"></line>
  <line x1="880.5" y1="219" x2="880.5" y2="244" stroke="#d46aa0" stroke-width="1" stroke-dasharray="2 2"></line>
  <!-- selection -->
  <rect x="662.5" y="244.5" width="218" height="242" fill="none" stroke="#2ec3d4" stroke-width="1.3"></rect>
  <!-- move cursor -->
  <g transform="translate(779 373)" fill="#fff" stroke="#444" stroke-width=".9">
    <path d="M0-7l2.5 3h-1.5v3h3v-1.5l3 2.5-3 2.5v-1.5h-3v3h1.5l-2.5 3-2.5-3h1.5v-3h-3v1.5l-3-2.5 3-2.5v1.5h3v-3h-1.5z"></path>
  </g>
  <!-- scroll arrows -->
  <path d="M291 645l3-2v4z" fill="#9a9ca0"></path>
  <path d="M1262 644l3 2.5-3 2.5z" fill="#9a9ca0"></path>
  <path d="M1272 634h5l-2.5 3z" fill="#9a9ca0"></path>
  <path d="M1275 124l2.5 3h-5z" fill="#9a9ca0"></path>
</svg>
<!-- panel handle -->
<svg style="left:287px;top:353px" width="11" height="58" viewBox="0 0 11 58"><path d="M0 0v58l10-7V9z" fill="#282a33"></path><path d="M4.5 26.5l-2 2.5 2 2.5" stroke="#bfc1c6" stroke-width="1" fill="none"></path></svg>
<i class="t" style="left: 754px; top: 601.5px; font-size: 10px; color: rgb(14, 19, 24); transform: scaleX(0.963);">+ Add page</i>

<div id="foot" class="a">
  <div class="a" style="left:478px;top:-9px;width:48px;height:10px;background:#fff;border-radius:10px 10px 0 0"></div>
  <svg style="left:497px;top:-5px" width="8" height="5"><path d="M1 4l3-3 3 3" stroke="#6b6e74" stroke-width="1" fill="none"></path></svg>
  <i class="t" style="left: 14px; top: 7.5px; font-size: 10.5px; color: rgb(14, 19, 24); transform: scaleX(0.948);">Notes</i>
  <div class="a" style="left:707px;top:13px;width:105px;height:1px;background:#d9dadd"></div>
  <div class="a" style="left:699px;top:9.5px;width:8px;height:8px;border-radius:50%;background:#0e1318"></div>
  <i class="t" style="left: 841px; top: 8px; font-size: 10.5px; color: rgb(14, 19, 24); transform: scaleX(0.857);">21%</i>
  <svg style="left:882px;top:6px" width="15" height="15"><rect x="3.5" y="0.7" width="10.5" height="10.5" rx="1" stroke="#0e1318" stroke-width="1" fill="#fff"></rect><rect x="0.8" y="3" width="11" height="11" rx="1" stroke="#0e1318" stroke-width="1.3" fill="#fff"></rect><path d="M6.3 6.5l1-.7v5.2" stroke="#0e1318" stroke-width="1" fill="none"></path></svg>
  <svg style="left:910px;top:6px" width="13" height="13"><path d="M7.5 5.5l4-4M8.5 1.3h3.2v3.2M5.5 7.5l-4 4M1.3 8.5v3.2h3.2" stroke="#0e1318" stroke-width="1.2" fill="none"></path></svg>
  <div class="a" style="left:934px;top:7px;width:1px;height:14px;background:#e6e7ea"></div>
  <svg style="left:942px;top:6px" width="15" height="15"><circle cx="7.5" cy="7.5" r="6.5" stroke="#0e1318" stroke-width="1.2" fill="none"></circle><path d="M4.6 7.7l2 2 3.8-4" stroke="#0e1318" stroke-width="1.2" fill="none"></path></svg>
  <svg style="left:969px;top:6px" width="15" height="15"><circle cx="7.5" cy="7.5" r="6.5" stroke="#0e1318" stroke-width="1.2" fill="none"></circle><path d="M5.5 5.8a2 2 0 1 1 2.8 1.8c-.6.3-.8.7-.8 1.4" stroke="#0e1318" stroke-width="1.2" fill="none"></path><circle cx="7.5" cy="10.8" r=".8" fill="#0e1318"></circle></svg>
</div>

<div id="dl" class="a">
  <svg style="left:13px;top:12px" width="10" height="13"><path d="M1 1h5.5L9 3.5V12H1z" fill="#fff"></path><rect x="2.5" y="5.5" width="5" height="4.5" fill="#3b7bd4"></rect><path d="M2.5 10l2-2 1.5 1.2 1.5-1.7V10z" fill="#9fd0f5"></path></svg>
  <i class="t" style="left: 33px; top: 13.5px; font-size: 9.5px; color: rgb(232, 234, 237); transform: scaleX(0.921);">Untitled design (1).png</i>
  <svg style="left:138px;top:15px" width="9" height="6"><path d="M1 5l3.5-3.5L8 5" stroke="#e8eaed" stroke-width="1.1" fill="none"></path></svg>
  <div class="a" style="left:157px;top:5px;width:1px;height:28px;background:#4a494e"></div>
  <svg style="left:168px;top:12px" width="10" height="13"><path d="M1 1h5.5L9 3.5V12H1z" fill="#fff"></path><rect x="2.5" y="5.5" width="5" height="4.5" fill="#3b7bd4"></rect><path d="M2.5 10l2-2 1.5 1.2 1.5-1.7V10z" fill="#9fd0f5"></path></svg>
  <i class="t" style="left: 188px; top: 13.5px; font-size: 9.5px; color: rgb(232, 234, 237); transform: scaleX(0.922);">Untitled design.png</i>
  <svg style="left:293px;top:15px" width="9" height="6"><path d="M1 5l3.5-3.5L8 5" stroke="#e8eaed" stroke-width="1.1" fill="none"></path></svg>
  <div class="a" style="left:313px;top:5px;width:1px;height:28px;background:#4a494e"></div>
  <div class="a" style="left:1205px;top:9px;width:49px;height:18px;border-radius:3px;background:#2a292d"></div>
  <i class="t" style="left: 1214px; top: 13.5px; font-size: 9px; color: rgb(138, 180, 248); transform: scaleX(0.911);">Show all</i>
  <svg style="left:1263px;top:13px" width="10" height="10"><path d="M1 1l8 8M9 1l-8 8" stroke="#e8eaed" stroke-width="1.2"></path></svg>
  <div class="a" style="left:32px;top:37px;width:230px;height:2px;background:#e8e8e8"></div>
</div>

<!-- globe -->
<svg style="left:1129px;top:597px" width="92" height="92" viewBox="-46 -46 92 92"><circle r="45.5" fill="rgba(250,252,255,.12)" stroke="#a6c8f0" stroke-width="1"></circle><path d="M-25.7 26.0L-11.9 21.4M-17.6 -35.5L0.1 -35.4M21.4 -12.8L21.3 5.8M10.3 44.0L16.3 36.7M-8.1 44.7L-1.7 41.4M-37.7 13.2L-25.7 26.0M-4.5 -43.6L8.1 -44.7M-7.3 -11.5L6.5 -3.7M21.4 -12.8L34.4 -2.2M-40.6 -15.3L-29.3 -21.7M-4.5 -43.6L13.2 -40.5M-26.9 -36.2L-19.3 -40.5M2.9 31.0L19.5 23.2M-43.2 0.3L-37.7 13.2M-11.9 21.4L-11.9 33.6M-37.7 13.2L-26.2 9.4M2.9 31.0L16.3 36.7M-19.3 -40.5L-10.3 -44.0M26.9 36.2L31.5 25.8M-10.1 4.1L5.1 14.9M-11.9 33.6L-1.7 41.4M-31.4 -31.0L-19.3 -40.5M17.8 -29.3L26.8 -32.5M-36.0 -4.1L-37.7 13.2M-13.0 -24.4L4.7 -21.3M-45.2 -4.9L-43.2 0.3M-39.4 -22.5L-31.4 -31.0M-1.7 41.4L2.9 31.0M16.3 36.7L19.5 23.2M-36.0 -4.1L-22.2 -8.7M-34.4 27.9L-25.7 26.0M-40.6 -15.3L-36.0 -4.1M-43.5 12.7L-37.7 13.2M-7.3 -11.5L-10.1 4.1M-29.3 -21.7L-13.0 -24.4M-39.4 -22.5L-40.6 -15.3M31.4 13.4L40.7 10.1M-7.3 -11.5L4.7 -21.3M-13.0 -24.4L-7.3 -11.5M-10.3 -44.0L-4.5 -43.6M19.5 23.2L31.5 25.8M32.6 -19.8L34.4 -2.2M-22.2 -8.7L-13.0 -24.4M19.5 23.2L31.4 13.4M2.9 31.0L5.1 14.9M8.1 -44.7L13.2 -40.5M34.4 -2.2L40.7 10.1M39.4 22.5L45.2 4.9M0.1 -35.4L13.2 -40.5M-45.2 -4.9L-43.5 12.7M-13.0 -24.4L0.1 -35.4M26.8 -32.5L37.2 -25.1M-40.6 -15.3L-31.4 -31.0M-19.4 38.3L-1.7 41.4M31.4 13.4L31.5 25.8M-31.4 -31.0L-29.3 -21.7M8.1 -44.7L25.1 -37.9M-1.7 41.4L10.3 44.0M-36.0 -4.1L-26.2 9.4M17.8 -29.3L32.6 -19.8M4.7 -21.3L6.5 -3.7M-17.6 -35.5L-13.0 -24.4M-25.1 37.9L-19.4 38.3M-19.4 38.3L-8.1 44.7M-25.7 26.0L-11.9 33.6M-34.4 27.9L-25.1 37.9M-11.9 21.4L5.1 14.9M13.2 -40.5L17.8 -29.3M31.5 25.8L39.4 22.5M0.1 -35.4L4.7 -21.3M-10.1 4.1L-11.9 21.4M-36.0 -4.1L-29.3 -21.7M-43.5 12.7L-34.4 27.9M13.2 -40.5L26.8 -32.5M6.5 -3.7L21.4 -12.8M21.3 5.8L19.5 23.2M5.1 14.9L19.5 23.2M-31.4 -31.0L-26.9 -36.2M32.6 -19.8L37.2 -25.1M-34.4 27.9L-19.4 38.3M-11.9 21.4L2.9 31.0M25.1 -37.9L26.8 -32.5M21.4 -12.8L32.6 -19.8M25.1 -37.9L37.2 -25.1M5.1 14.9L21.3 5.8M-26.2 9.4L-11.9 21.4M21.3 5.8L34.4 -2.2M26.9 36.2L39.4 22.5M43.5 -12.7L42.5 -8.2M42.5 -8.2L45.2 4.9M-25.7 26.0L-19.4 38.3M-19.4 38.3L-11.9 33.6M39.4 22.5L40.7 10.1M-19.3 -40.5L-17.6 -35.5M16.3 36.7L31.5 25.8M-10.1 4.1L6.5 -3.7M-26.2 9.4L-10.1 4.1M6.5 -3.7L21.3 5.8M37.2 -25.1L42.5 -8.2M31.5 25.8L40.7 10.1M42.5 -8.2L40.7 10.1M-40.6 -15.3L-43.2 0.3M-26.2 9.4L-22.2 -8.7M-43.5 12.7L-43.2 0.3M-4.5 -43.6L0.1 -35.4M10.3 44.0L26.9 36.2M40.7 10.1L45.2 4.9M-19.3 -40.5L-4.5 -43.6M-8.1 44.7L10.3 44.0M-22.2 -8.7L-10.1 4.1M-29.3 -21.7L-22.2 -8.7M6.5 -3.7L5.1 14.9M-17.6 -35.5L-4.5 -43.6M-26.2 9.4L-25.7 26.0M26.8 -32.5L32.6 -19.8M32.6 -19.8L42.5 -8.2M-22.2 -8.7L-7.3 -11.5M-43.2 0.3L-36.0 -4.1M-29.3 -21.7L-17.6 -35.5M16.3 36.7L26.9 36.2M34.4 -2.2L42.5 -8.2M-11.9 33.6L2.9 31.0M-31.4 -31.0L-17.6 -35.5M-1.7 41.4L16.3 36.7M4.7 -21.3L21.4 -12.8M0.1 -35.4L17.8 -29.3M-45.2 -4.9L-40.6 -15.3M-37.7 13.2L-34.4 27.9M13.2 -40.5L25.1 -37.9M17.8 -29.3L21.4 -12.8M-37.2 25.1L-34.4 27.9M4.7 -21.3L17.8 -29.3M31.4 13.4L34.4 -2.2M21.3 5.8L31.4 13.4M37.2 -25.1L43.5 -12.7" stroke="#c4daf4" stroke-width=".45" fill="none" opacity=".5"></path><path d="M-17.8 29.3L-0.1 35.4M-5.1 -14.9L-6.5 3.7M-21.4 12.8L-6.5 3.7M-37.2 25.1L-25.1 37.9M-26.8 32.5L-13.2 40.5M34.4 -27.9L37.7 -13.2M-31.5 -25.8L-19.5 -23.2M-40.7 -10.1L-31.4 -13.4M29.3 21.7L40.6 15.3M-2.9 -31.0L11.9 -21.4M19.4 -38.3L25.1 -37.9M-10.3 -44.0L1.7 -41.4M10.1 -4.1L26.2 -9.4M13.0 24.4L22.2 8.7M-45.2 -4.9L-42.5 8.2M-31.4 -13.4L-19.5 -23.2M-31.5 -25.8L-26.9 -36.2M-19.5 -23.2L-21.3 -5.8M-5.1 -14.9L11.9 -21.4M1.7 -41.4L8.1 -44.7M34.4 -27.9L37.2 -25.1M-21.4 12.8L-4.7 21.3M-17.8 29.3L-13.2 40.5M4.5 43.6L19.3 40.5M40.6 15.3L45.2 4.9M1.7 -41.4L11.9 -33.6M-19.5 -23.2L-16.3 -36.7M4.5 43.6L17.6 35.5M10.1 -4.1L7.3 11.5M-2.9 -31.0L11.9 -33.6M31.4 31.0L39.4 22.5M-34.4 2.2L-32.6 19.8M-25.1 37.9L-8.1 44.7M-13.2 40.5L-0.1 35.4M19.3 40.5L26.9 36.2M11.9 -21.4L10.1 -4.1M7.3 11.5L13.0 24.4M29.3 21.7L36.0 4.1M40.6 15.3L39.4 22.5M-13.2 40.5L-8.1 44.7M37.7 -13.2L43.2 -0.3M17.6 35.5L29.3 21.7M-26.8 32.5L-25.1 37.9M26.2 -9.4L37.7 -13.2M36.0 4.1L40.6 15.3M-26.9 -36.2L-16.3 -36.7M25.7 -26.0L26.2 -9.4M-40.7 -10.1L-42.5 8.2M-26.9 -36.2L-10.3 -44.0M11.9 -33.6L19.4 -38.3M43.2 -0.3L40.6 15.3M10.1 -4.1L22.2 8.7M22.2 8.7L26.2 -9.4M-34.4 2.2L-31.4 -13.4M-16.3 -36.7L-10.3 -44.0M25.1 -37.9L34.4 -27.9M-32.6 19.8L-17.8 29.3M-45.2 -4.9L-40.7 -10.1M29.3 21.7L31.4 31.0M-5.1 -14.9L-2.9 -31.0M-19.5 -23.2L-5.1 -14.9M-10.3 -44.0L8.1 -44.7M-31.5 -25.8L-31.4 -13.4M8.1 -44.7L19.4 -38.3M11.9 -21.4L25.7 -26.0M-40.7 -10.1L-34.4 2.2M19.4 -38.3L34.4 -27.9M-4.7 21.3L-0.1 35.4M-42.5 8.2L-37.2 25.1M-32.6 19.8L-21.4 12.8M43.2 -0.3L43.5 -12.7M-6.5 3.7L10.1 -4.1M7.3 11.5L22.2 8.7M-40.7 -10.1L-31.5 -25.8M10.3 44.0L19.3 40.5M-34.4 2.2L-21.3 -5.8M-32.6 19.8L-26.8 32.5M43.2 -0.3L45.2 4.9M-16.3 -36.7L1.7 -41.4M-42.5 8.2L-34.4 2.2M25.7 -26.0L37.7 -13.2M-4.7 21.3L7.3 11.5M1.7 -41.4L19.4 -38.3M26.2 -9.4L36.0 4.1M22.2 8.7L29.3 21.7M-21.3 -5.8L-5.1 -14.9M-6.5 3.7L-4.7 21.3M-0.1 35.4L4.5 43.6M-31.4 -13.4L-21.3 -5.8M-39.4 -22.5L-31.5 -25.8M-8.1 44.7L4.5 43.6M-42.5 8.2L-43.5 12.7M-31.5 -25.8L-16.3 -36.7M-45.2 -4.9L-39.4 -22.5M31.4 31.0L40.6 15.3M25.7 -26.0L34.4 -27.9M-21.3 -5.8L-6.5 3.7M-21.3 -5.8L-21.4 12.8M37.7 -13.2L43.5 -12.7M11.9 -33.6L25.7 -26.0M17.6 35.5L31.4 31.0M-4.7 21.3L13.0 24.4M19.4 -38.3L25.7 -26.0M13.0 24.4L17.6 35.5M19.3 40.5L31.4 31.0M37.7 -13.2L36.0 4.1M11.9 -21.4L26.2 -9.4M-13.2 40.5L4.5 43.6M-26.8 32.5L-17.8 29.3M-5.1 -14.9L10.1 -4.1M-17.8 29.3L-4.7 21.3M-2.9 -31.0L1.7 -41.4M11.9 -33.6L11.9 -21.4M22.2 8.7L36.0 4.1M-39.4 -22.5L-26.9 -36.2M26.9 36.2L31.4 31.0M-19.5 -23.2L-2.9 -31.0M-40.7 -10.1L-39.4 -22.5M-37.2 25.1L-32.6 19.8M-6.5 3.7L7.3 11.5M4.5 43.6L10.3 44.0M-43.5 12.7L-37.2 25.1M-37.2 25.1L-26.8 32.5M-34.4 2.2L-21.4 12.8M-0.1 35.4L17.6 35.5M-21.4 12.8L-17.8 29.3M-42.5 8.2L-32.6 19.8M43.5 -12.7L45.2 4.9M-25.1 37.9L-13.2 40.5M13.0 24.4L29.3 21.7M34.4 -27.9L43.5 -12.7M-16.3 -36.7L-2.9 -31.0M17.6 35.5L19.3 40.5M36.0 4.1L43.2 -0.3M-0.1 35.4L13.0 24.4" stroke="#98bce8" stroke-width=".6" fill="none"></path><circle cx="7.3" cy="11.5" r="2.0" fill="#88c6ee"></circle><circle cx="-6.5" cy="3.7" r="2.0" fill="#7478d8"></circle><circle cx="-21.3" cy="-5.8" r="1.9" fill="#7478d8"></circle><circle cx="-31.4" cy="-13.4" r="1.7" fill="#7478d8"></circle><circle cx="-4.7" cy="21.3" r="1.9" fill="#7478d8"></circle><circle cx="-21.4" cy="12.8" r="1.8" fill="#7478d8"></circle><circle cx="-34.4" cy="2.2" r="1.7" fill="#7478d8"></circle><circle cx="-17.8" cy="29.3" r="1.7" fill="#7478d8"></circle><circle cx="-32.6" cy="19.8" r="1.5" fill="#7478d8"></circle><circle cx="-26.8" cy="32.5" r="1.4" fill="#7478d8"></circle><circle cx="19.3" cy="40.5" r="1.2" fill="#88c6ee"></circle><circle cx="17.6" cy="35.5" r="1.5" fill="#88c6ee"></circle><circle cx="13.0" cy="24.4" r="1.8" fill="#88c6ee"></circle><circle cx="4.5" cy="43.6" r="1.3" fill="#88c6ee"></circle><circle cx="-0.1" cy="35.4" r="1.6" fill="#88c6ee"></circle><circle cx="-13.2" cy="40.5" r="1.4" fill="#7478d8"></circle><circle cx="-25.1" cy="37.9" r="1.1" fill="#7478d8"></circle><circle cx="-37.2" cy="25.1" r="1.2" fill="#7478d8"></circle><circle cx="-40.7" cy="-10.1" r="1.4" fill="#7478d8"></circle><circle cx="-45.2" cy="-4.9" r="1.0" fill="#7478d8"></circle><circle cx="-42.5" cy="8.2" r="1.3" fill="#7478d8"></circle><circle cx="43.2" cy="-0.3" r="1.3" fill="#88c6ee"></circle><circle cx="36.0" cy="4.1" r="1.6" fill="#88c6ee"></circle><circle cx="22.2" cy="8.7" r="1.9" fill="#88c6ee"></circle><circle cx="40.6" cy="15.3" r="1.3" fill="#88c6ee"></circle><circle cx="29.3" cy="21.7" r="1.6" fill="#88c6ee"></circle><circle cx="31.4" cy="31.0" r="1.2" fill="#88c6ee"></circle><circle cx="11.9" cy="-33.6" r="1.6" fill="#88c6ee"></circle><circle cx="-2.9" cy="-31.0" r="1.7" fill="#7478d8"></circle><circle cx="-19.5" cy="-23.2" r="1.7" fill="#7478d8"></circle><circle cx="11.9" cy="-21.4" r="1.8" fill="#88c6ee"></circle><circle cx="-5.1" cy="-14.9" r="1.9" fill="#7478d8"></circle><circle cx="10.1" cy="-4.1" r="2.0" fill="#88c6ee"></circle><circle cx="-26.9" cy="-36.2" r="1.1" fill="#7478d8"></circle><circle cx="-39.4" cy="-22.5" r="1.1" fill="#7478d8"></circle><circle cx="-31.5" cy="-25.8" r="1.4" fill="#7478d8"></circle><circle cx="25.7" cy="-26.0" r="1.6" fill="#88c6ee"></circle><circle cx="37.7" cy="-13.2" r="1.5" fill="#88c6ee"></circle><circle cx="19.4" cy="-38.3" r="1.3" fill="#88c6ee"></circle><circle cx="34.4" cy="-27.9" r="1.2" fill="#88c6ee"></circle><circle cx="43.5" cy="-12.7" r="1.1" fill="#88c6ee"></circle><circle cx="-10.3" cy="-44.0" r="1.1" fill="#7478d8"></circle><circle cx="1.7" cy="-41.4" r="1.4" fill="#7478d8"></circle><circle cx="8.1" cy="-44.7" r="1.0" fill="#7478d8"></circle><circle cx="26.2" cy="-9.4" r="1.8" fill="#88c6ee"></circle><circle cx="-16.3" cy="-36.7" r="1.5" fill="#7478d8"></circle></svg>


</body></html>
